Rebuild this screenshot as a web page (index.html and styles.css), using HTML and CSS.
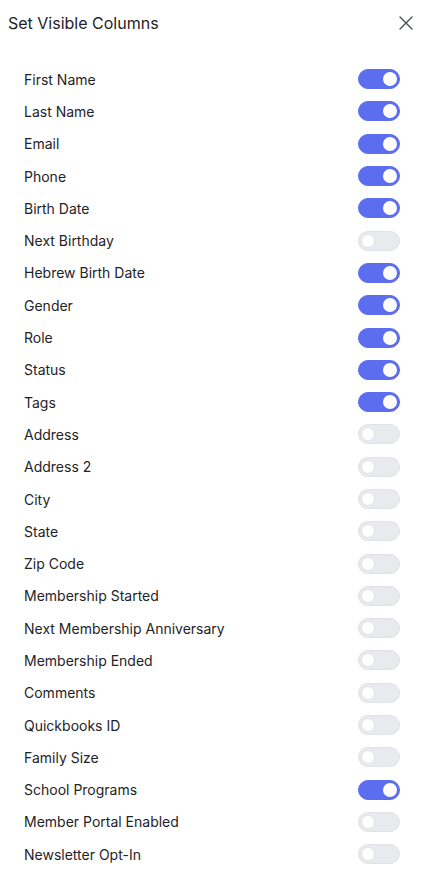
FILE: index.html
```html
<!DOCTYPE html>
<html lang="en">
<head>
    <meta charset="UTF-8">
    <meta name="viewport" content="width=device-width, initial-scale=1.0">
    <title>Set Visible Columns</title>
    <link rel="stylesheet" href="styles.css">
</head>
<body>

<div class="panel">
    <header class="panel-header">
        <h2>Set Visible Columns</h2>
        <button class="close-btn" type="button" aria-label="Close">
            <svg width="14" height="14" viewBox="0 0 14 14">
                <path d="M1 1L13 13M13 1L1 13" stroke="#4b5058" stroke-width="1.4" stroke-linecap="round"/>
            </svg>
        </button>
    </header>

    <ul class="column-list">
        <li><span>First Name</span><label class="switch"><input type="checkbox" checked><i></i></label></li>
        <li><span>Last Name</span><label class="switch"><input type="checkbox" checked><i></i></label></li>
        <li><span>Email</span><label class="switch"><input type="checkbox" checked><i></i></label></li>
        <li><span>Phone</span><label class="switch"><input type="checkbox" checked><i></i></label></li>
        <li><span>Birth Date</span><label class="switch"><input type="checkbox" checked><i></i></label></li>
        <li><span>Next Birthday</span><label class="switch"><input type="checkbox"><i></i></label></li>
        <li><span>Hebrew Birth Date</span><label class="switch"><input type="checkbox" checked><i></i></label></li>
        <li><span>Gender</span><label class="switch"><input type="checkbox" checked><i></i></label></li>
        <li><span>Role</span><label class="switch"><input type="checkbox" checked><i></i></label></li>
        <li><span>Status</span><label class="switch"><input type="checkbox" checked><i></i></label></li>
        <li><span>Tags</span><label class="switch"><input type="checkbox" checked><i></i></label></li>
        <li><span>Address</span><label class="switch"><input type="checkbox"><i></i></label></li>
        <li><span>Address 2</span><label class="switch"><input type="checkbox"><i></i></label></li>
        <li><span>City</span><label class="switch"><input type="checkbox"><i></i></label></li>
        <li><span>State</span><label class="switch"><input type="checkbox"><i></i></label></li>
        <li><span>Zip Code</span><label class="switch"><input type="checkbox"><i></i></label></li>
        <li><span>Membership Started</span><label class="switch"><input type="checkbox"><i></i></label></li>
        <li><span>Next Membership Anniversary</span><label class="switch"><input type="checkbox"><i></i></label></li>
        <li><span>Membership Ended</span><label class="switch"><input type="checkbox"><i></i></label></li>
        <li><span>Comments</span><label class="switch"><input type="checkbox"><i></i></label></li>
        <li><span>Quickbooks ID</span><label class="switch"><input type="checkbox"><i></i></label></li>
        <li><span>Family Size</span><label class="switch"><input type="checkbox"><i></i></label></li>
        <li><span>School Programs</span><label class="switch"><input type="checkbox" checked><i></i></label></li>
        <li><span>Member Portal Enabled</span><label class="switch"><input type="checkbox"><i></i></label></li>
        <li><span>Newsletter Opt-In</span><label class="switch"><input type="checkbox"><i></i></label></li>
    </ul>
</div>

</body>
</html>
```

FILE: styles.css
```css
body {
    font-family: Inter, 'Noto Sans', sans-serif;
    margin: 0;
    padding: 0;
    background-color: #ffffff;
    color: #1f2328;
}

.panel {
    padding: 12px 14px 20px 8px;
}

.panel-header {
    display: flex;
    justify-content: space-between;
    align-items: center;
    height: 22px;
}

.panel-header h2 {
    margin: 0;
    font-size: 16px;
    font-weight: 400;
}

.close-btn {
    border: none;
    background: none;
    padding: 0;
    width: 14px;
    height: 14px;
    cursor: pointer;
}

.column-list {
    list-style: none;
    margin: 29px 13px 0 16px;
    padding: 0;
}

.column-list li {
    display: flex;
    justify-content: space-between;
    align-items: center;
    height: 32.3px;
    font-size: 14px;
}

.switch {
    position: relative;
    display: inline-block;
    width: 42px;
    height: 20px;
}

.switch input {
    display: none;
}

.switch i {
    position: absolute;
    inset: 0;
    border-radius: 10px;
    background-color: #e9eaee;
    border: 1px solid #e0e2e6;
    box-sizing: border-box;
    cursor: pointer;
}

.switch i::after {
    content: "";
    position: absolute;
    top: 2px;
    left: 2px;
    width: 14px;
    height: 14px;
    border-radius: 50%;
    background-color: white;
    border: 0.5px solid #e0e2e6;
    box-sizing: border-box;
}

.switch input:checked + i {
    background-color: #5c6ef0;
    border-color: #5c6ef0;
}

.switch input:checked + i::after {
    left: 24px;
    border: none;
}
```
